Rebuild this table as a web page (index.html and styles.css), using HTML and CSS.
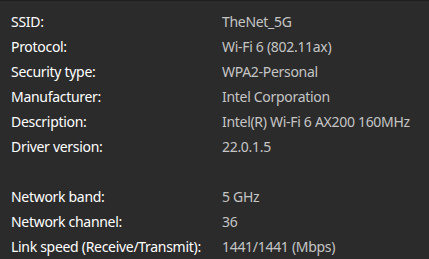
FILE: index.html
```html
<!DOCTYPE html>
<html>
  <head>
    <meta charset='utf-8'/>
    <link rel="stylesheet" href="styles.css">
  </head>
  <body>
    <div class='props'>
      <div class='label'>SSID:</div><div class='value'>TheNet_5G</div>
      <div class='label'>Protocol:</div><div class='value'>Wi-Fi 6 (802.11ax)</div>
      <div class='label'>Security type:</div><div class='value'>WPA2-Personal</div>
      <div class='label'>Manufacturer:</div><div class='value'>Intel Corporation</div>
      <div class='label'>Description:</div><div class='value'>Intel(R) Wi-Fi 6 AX200 160MHz</div>
      <div class='label'>Driver version:</div><div class='value'>22.0.1.5</div>
      <div class='spacer'></div>
      <div class='label'>Network band:</div><div class='value'>5 GHz</div>
      <div class='label'>Network channel:</div><div class='value'>36</div>
      <div class='label'>Link speed (Receive/Transmit):</div><div class='value'>1441/1441 (Mbps)</div>
    </div>
  </body>
</html>
```

FILE: styles.css
```css
* {
  font-family: 'Noto Sans', sans-serif;
}

html, body {
  height: 100%;
}

body {
  margin: 0;
  background: #2b2b2b;
  border-top: 1px solid #1f1f1f;
  box-sizing: border-box;
  overflow: hidden;
}

.props {
  display: grid;
  grid-template-columns: 211px 1fr;
  grid-auto-rows: 25px;
  padding: 8px 0 0 11px;
  font-size: 14px;
  line-height: 25px;
  letter-spacing: -0.3px;
}

.label {
  color: #ffffff;
}

.value {
  color: #c5c5c5;
}

.spacer {
  grid-column: 1 / 3;
}
```
